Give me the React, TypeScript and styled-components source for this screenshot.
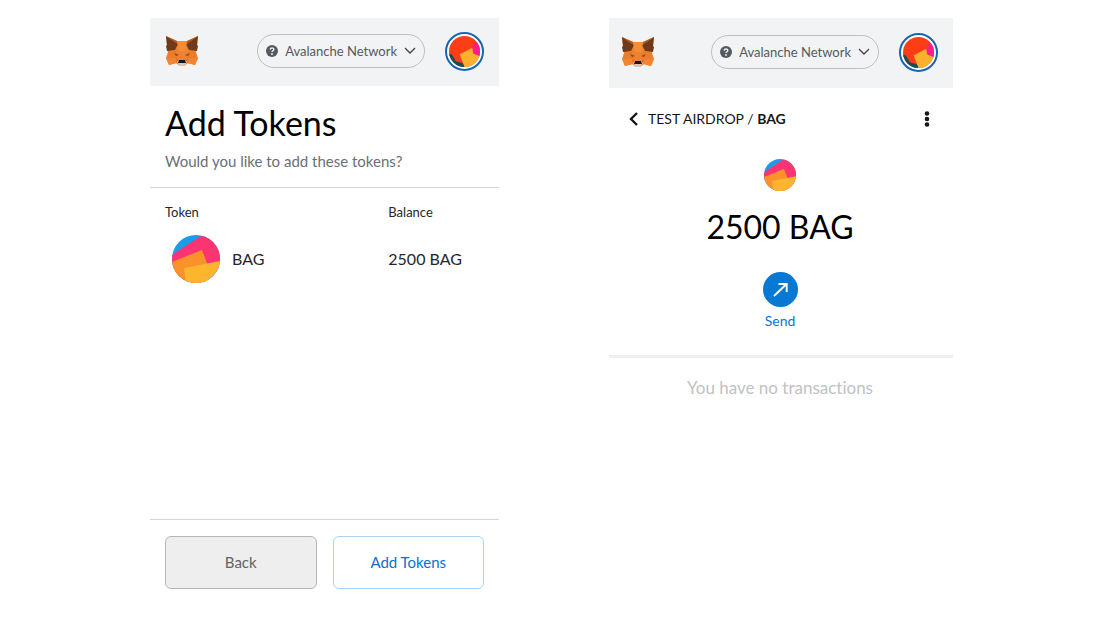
import React, { useId } from 'react';
import styled, { createGlobalStyle } from 'styled-components';

const GlobalStyle = createGlobalStyle`
  *, *::before, *::after { box-sizing: border-box; }
  body {
    margin: 0;
    background: #fff;
    color: #24272a;
    font-family: Lato, "Liberation Sans", sans-serif;
    font-variant-ligatures: none;
  }
  button { font-family: inherit; cursor: pointer; }
`;

const Page = styled.main`
  display: grid;
  grid-template-columns: 349fr 344fr;
  column-gap: 110px;
  min-height: 100vh;
  padding: 18px 151px 16px 150px;
`;

const Panel = styled.section`
  display: flex;
  flex-direction: column;
  min-width: 0;
`;

const Header = styled.header<{ $tall?: boolean }>`
  display: flex;
  align-items: center;
  gap: 20px;
  height: ${(p) => (p.$tall ? 70 : 68)}px;
  padding: 0 15px 2px ${(p) => (p.$tall ? 12 : 15)}px;
  background: #f2f3f4;
  svg { display: block; flex: none; }
`;

const NetworkButton = styled.button`
  display: flex;
  align-items: center;
  gap: 7px;
  height: 34px;
  margin-left: auto;
  padding: 0 8px;
  border: 1px solid #bbc0c5;
  border-radius: 17px;
  background: transparent;
  color: #535a61;
  font-size: 13px;
  line-height: 20px;
  white-space: nowrap;
`;

const AccountButton = styled.button`
  flex: none;
  width: 39px;
  height: 39px;
  padding: 2px;
  border: 2px solid #1565b5;
  border-radius: 50%;
  background: #fff;
  svg { width: 100%; height: 100%; }
`;

const Intro = styled.div`
  padding: 17px 15px 15px;
  border-bottom: 1px solid #d2d4d6;
`;

const Title = styled.h1`
  margin: 0 0 8px;
  color: #000;
  font-size: 34px;
  font-weight: 400;
  line-height: 40px;
`;

const Subtitle = styled.p`
  margin: 0 0 1px;
  color: #6a6f75;
  font-size: 15px;
  line-height: 20px;
`;

const TokenArea = styled.div`
  flex: 1;
  padding: 14px 15px;
`;

const TokenTable = styled.table`
  width: 100%;
  table-layout: fixed;
  border-collapse: collapse;
  th {
    padding: 0 0 13px;
    font-size: 13px;
    font-weight: 400;
    line-height: 20px;
    text-align: left;
  }
  th:first-child { width: 70%; }
  td {
    padding: 0;
    font-size: 16px;
    line-height: 24px;
    white-space: nowrap;
  }
`;

const TokenName = styled.div`
  display: flex;
  align-items: center;
  gap: 12px;
  padding-left: 7px;
`;

const Footer = styled.footer`
  display: grid;
  grid-template-columns: 1fr 1fr;
  gap: 16px;
  padding: 16px 15px;
  border-top: 1px solid #d2d4d6;
`;

const ActionButton = styled.button<{ $primary?: boolean }>`
  height: 53px;
  padding: 0 8px 2px;
  border: 1px solid ${(p) => (p.$primary ? '#a9d3f0' : '#b4b6b8')};
  border-radius: 6px;
  background: ${(p) => (p.$primary ? '#fff' : '#eee')};
  color: ${(p) => (p.$primary ? '#0b6fcb' : '#5d636a')};
  font-size: 15px;
  line-height: 20px;
`;

const AssetNav = styled.nav`
  display: flex;
  align-items: center;
  gap: 9px;
  padding: 21px 20px 0 19px;
  color: #141618;
  font-size: 14px;
  line-height: 20px;
  white-space: nowrap;
  strong { font-weight: 700; }
`;

const IconButton = styled.button`
  display: flex;
  flex: none;
  padding: 0;
  border: 0;
  background: none;
  color: inherit;
`;

const MenuButton = styled(IconButton)`
  margin-left: auto;
`;

const Overview = styled.div`
  display: flex;
  flex-direction: column;
  align-items: center;
  padding: 30px 17px 24px 15px;
  border-bottom: 3px solid #efefef;
`;

const Amount = styled.h2`
  margin: 16px 0 25px;
  color: #000;
  font-size: 32px;
  font-weight: 400;
  line-height: 40px;
  white-space: nowrap;
`;

const SendButton = styled.button`
  display: flex;
  flex-direction: column;
  align-items: center;
  gap: 4px;
  padding: 0;
  border: 0;
  background: none;
  color: #0b76d0;
  font-size: 14px;
  line-height: 20px;
`;

const Empty = styled.p`
  margin: 0;
  padding: 20px 17px 20px 15px;
  color: #c0c2c4;
  font-size: 17px;
  line-height: 20px;
  text-align: center;
`;

const Fox = () => (
  <svg width="34" height="32" viewBox="0 0 34 32" role="img" aria-label="MetaMask">
    <path d="M1 1 12 6h10L33 1l-1 10-1 6 2 6-3 7-7-2-4 3h-4l-4-3-7 2-3-7 2-6-1-6z" fill="#ef8231" />
    <path d="M1 1l12 8-3 6-8 1-1-5 1-1z" fill="#6f3a1c" />
    <path d="M33 1 21 9l3 6 8 1 1-5-1-1z" fill="#6f3a1c" />
    <path d="M1 1l11 5 1 3z" fill="#b4571f" />
    <path d="M33 1 22 6l-1 3z" fill="#b4571f" />
    <path d="M12 6h10l-2 10h-6z" fill="#f48d35" />
    <path d="M3 17l7-2 4 5-2 4-9 0zM31 17l-7-2-4 5 2 4 9 0z" fill="#ea7c2d" />
    <path d="M1 23h10l1 5-8 2zM33 23H23l-1 5 8 2z" fill="#f18632" />
    <path d="M9 18l5 2-3 1zM25 18l-5 2 3 1z" fill="#8d4a26" />
    <path d="M11 23l3 2-2 3zM23 23l-3 2 2 3z" fill="#e0702a" />
    <path d="M12 27l2-2h6l2 2-3 4h-4z" fill="#d4c6bc" />
    <path d="M14 25h6l1 3h-8z" fill="#15191d" />
  </svg>
);

const TokenIcon = ({ size }: { size: number }) => {
  const id = useId();
  return (
    <svg width={size} height={size} viewBox="0 0 48 48" aria-hidden="true">
      <clipPath id={id}>
        <circle cx="24" cy="24" r="24" />
      </clipPath>
      <g clipPath={`url(#${id})`}>
        <path d="M0 0h48v48H0z" fill="#1b9ce8" />
        <path d="M0 20 27 2 36-1 48 0v48H0z" fill="#fc3572" />
        <path d="M0 27 30 15l5 13v20H0z" fill="#fb9129" />
        <path d="M12 33 48 26v22H14z" fill="#fdb52d" />
      </g>
    </svg>
  );
};

const AccountIcon = () => {
  const id = useId();
  return (
    <svg viewBox="0 0 32 32" aria-hidden="true">
      <clipPath id={id}>
        <circle cx="16" cy="16" r="16" />
      </clipPath>
      <g clipPath={`url(#${id})`}>
        <path d="M0 0h32v32H0z" fill="#fc3d16" />
        <path d="M0 18 3 19 7 26 17 29v3H0z" fill="#174c55" />
        <path d="M23 13 28 6l4 2v15l-6-4z" fill="#fb1c8e" />
        <path d="M11 19 24 12l1 6 7 3v11H16z" fill="#fbb12d" />
      </g>
    </svg>
  );
};

const WalletHeader = ({ tall }: { tall?: boolean }) => (
  <Header $tall={tall}>
    <Fox />
    <NetworkButton type="button">
      <svg width="12" height="12" viewBox="0 0 12 12" aria-hidden="true">
        <circle cx="6" cy="6" r="6" fill="#535a61" />
        <path d="M4.2 4.6C4.3 2.4 7.8 2.4 7.8 4.5 7.8 5.8 6 5.7 6 7.1" fill="none" stroke="#f2f3f4" strokeWidth="1.4" />
        <circle cx="6" cy="9" r=".9" fill="#f2f3f4" />
      </svg>
      Avalanche Network
      <svg width="12" height="8" viewBox="0 0 12 8" aria-hidden="true">
        <path d="M1 1l5 5 5-5" fill="none" stroke="#3f454b" strokeWidth="1.3" />
      </svg>
    </NetworkButton>
    <AccountButton type="button" aria-label="Account">
      <AccountIcon />
    </AccountButton>
  </Header>
);

export default function App() {
  return (
    <>
      <GlobalStyle />
      <Page>
        <Panel>
          <WalletHeader />
          <Intro>
            <Title>Add Tokens</Title>
            <Subtitle>Would you like to add these tokens?</Subtitle>
          </Intro>
          <TokenArea>
            <TokenTable>
              <thead>
                <tr>
                  <th scope="col">Token</th>
                  <th scope="col">Balance</th>
                </tr>
              </thead>
              <tbody>
                <tr>
                  <td>
                    <TokenName>
                      <TokenIcon size={48} />
                      BAG
                    </TokenName>
                  </td>
                  <td>2500 BAG</td>
                </tr>
              </tbody>
            </TokenTable>
          </TokenArea>
          <Footer>
            <ActionButton type="button">Back</ActionButton>
            <ActionButton type="button" $primary>Add Tokens</ActionButton>
          </Footer>
        </Panel>
        <Panel>
          <WalletHeader tall />
          <AssetNav>
            <IconButton type="button" aria-label="Go back">
              <svg width="11" height="14" viewBox="0 0 11 14">
                <path d="M9 1 3 7l6 6" fill="none" stroke="currentColor" strokeWidth="2.4" />
              </svg>
            </IconButton>
            <span>TEST AIRDROP / <strong>BAG</strong></span>
            <MenuButton type="button" aria-label="Asset options">
              <svg width="12" height="16" viewBox="0 0 12 16" fill="currentColor">
                <circle cx="6" cy="2.5" r="2.3" />
                <circle cx="6" cy="8" r="2.3" />
                <circle cx="6" cy="13.5" r="2.3" />
              </svg>
            </MenuButton>
          </AssetNav>
          <Overview>
            <TokenIcon size={32} />
            <Amount>2500 BAG</Amount>
            <SendButton type="button">
              <svg width="35" height="35" viewBox="0 0 35 35" aria-hidden="true">
                <circle cx="17.5" cy="17.5" r="17.5" fill="#0879d2" />
                <path d="M11 24 23.5 12M15.5 12h8.2v8" fill="none" stroke="#fff" strokeWidth="1.9" />
              </svg>
              Send
            </SendButton>
          </Overview>
          <Empty>You have no transactions</Empty>
        </Panel>
      </Page>
    </>
  );
}
